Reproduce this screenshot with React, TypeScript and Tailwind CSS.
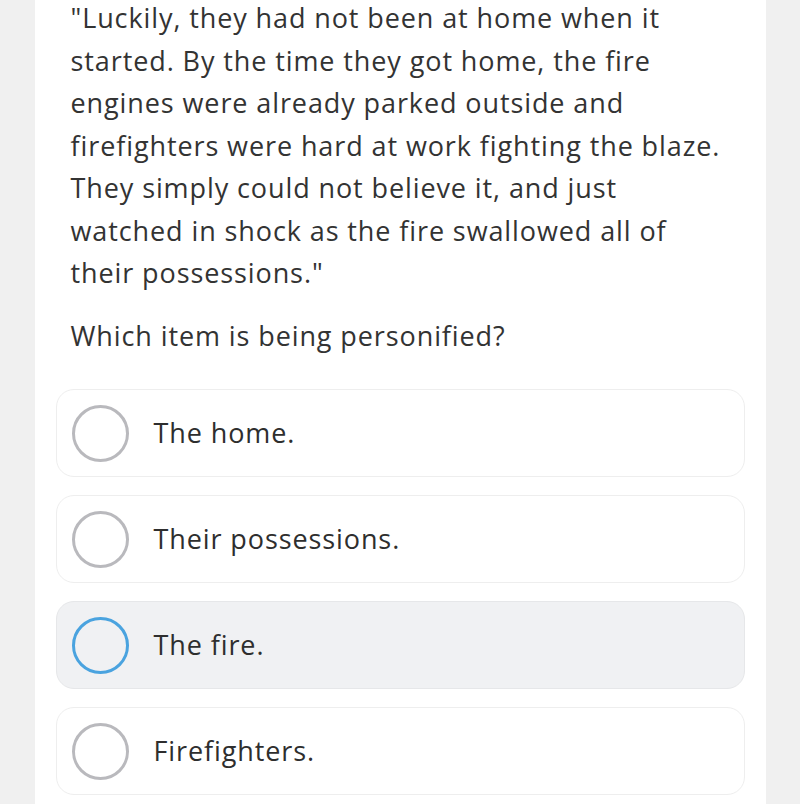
import React from "react";

const lines = [
  '"Luckily, they had not been at home when it',
  "started. By the time they got home, the fire",
  "engines were already parked outside and",
  "firefighters were hard at work fighting the blaze.",
  "They simply could not believe it, and just",
  "watched in shock as the fire swallowed all of",
  'their possessions."',
];

const options = [
  { label: "The home.", selected: false },
  { label: "Their possessions.", selected: false },
  { label: "The fire.", selected: true },
  { label: "Firefighters.", selected: false },
];

export default function App() {
  return (
    <div
      className="w-[800px] h-[804px] overflow-hidden bg-[#f0f0f0] flex justify-center"
      style={{ fontFamily: "'Open Sans', Lato, sans-serif", fontVariantLigatures: "none" }}
    >
      <div className="w-[731px] h-full bg-white px-[21px] text-[#333333]">
        <div className="px-[15px] mt-[-3px] tracking-[0.9px]">
          <p className="text-[27px] leading-[42.5px]">
            {lines.map((l, i) => (
              <span key={i} className="block whitespace-nowrap">{l}</span>
            ))}
          </p>
          <p className="text-[27px] leading-[42.5px] mt-[20px]">Which item is being personified?</p>
        </div>
        <div className="mt-[32px] flex flex-col gap-[18px]">
          {options.map((o) => (
            <div
              key={o.label}
              className={
                o.selected
                  ? "h-[88px] rounded-[18px] border border-[#e6e7e9] bg-[#f0f1f3] flex items-center pl-[15px]"
                  : "h-[88px] rounded-[18px] border border-[#eeeeee] bg-white flex items-center pl-[15px]"
              }
            >
              <div
                className={
                  o.selected
                    ? "w-[57px] h-[57px] rounded-full border-[3.5px] border-[#4aa3df] shrink-0"
                    : "w-[57px] h-[57px] rounded-full border-[3.5px] border-[#b9b9bd] shrink-0"
                }
              />
              <span className="ml-[25px] text-[27px] tracking-[0.9px] text-[#2e2e2e]">{o.label}</span>
            </div>
          ))}
        </div>
      </div>
    </div>
  );
}
